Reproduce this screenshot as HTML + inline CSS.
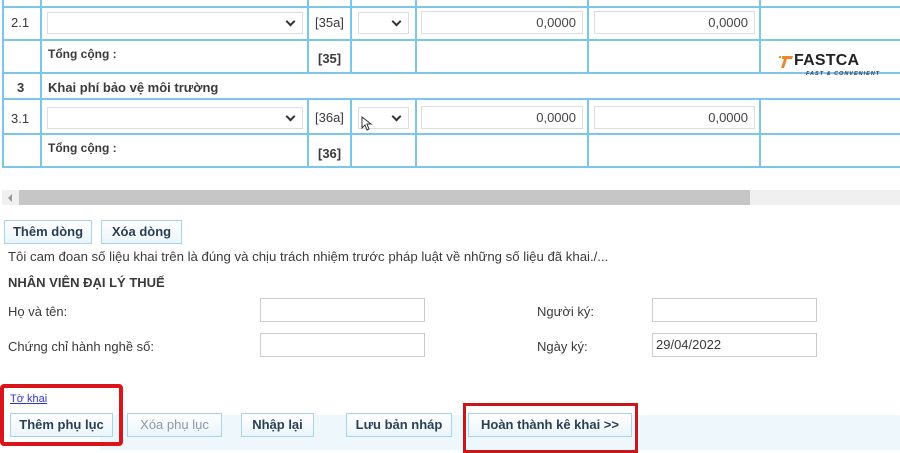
<!DOCTYPE html>
<html><head><meta charset="utf-8"><style>
*{margin:0;padding:0;box-sizing:border-box}
body{width:900px;height:450px;overflow:hidden;background:#fff;font-family:"Liberation Sans",Arial,sans-serif;font-size:13px;color:#3a3a3a;position:relative}
.a{position:absolute}
.h{position:absolute;height:2px;background:#7cc6e8}
.v{position:absolute;width:2px;background:#7cc6e8}
.sel{position:absolute;border:1px solid #ddd;background:#fff;height:22px}
.sel:after{content:"";position:absolute;right:8px;top:5px;width:5px;height:5px;border-right:2px solid #333;border-bottom:2px solid #333;transform:rotate(45deg)}
.inp{position:absolute;border:1px solid #ddd;background:#fff;height:23px;text-align:right;padding-right:6px;line-height:21px;font-size:13px;color:#444}
.b{font-weight:bold}
.btn{position:absolute;border:1px solid #a9d3ea;background:linear-gradient(#fff,#eaf5fb);font-weight:bold;font-size:13px;color:#2a3f55;text-align:center;line-height:22px;height:24px}
.f{position:absolute;border:1px solid #ccc;height:24px;background:#fff;font-size:13px;line-height:22px;padding-left:3px}
</style></head><body>
<div class="h" style="left:2px;top:6px;width:898px"></div>
<div class="h" style="left:2px;top:39px;width:898px"></div>
<div class="h" style="left:2px;top:72px;width:898px"></div>
<div class="h" style="left:2px;top:98px;width:898px"></div>
<div class="h" style="left:2px;top:133px;width:898px"></div>
<div class="h" style="left:2px;top:166px;width:898px"></div>
<div class="v" style="left:2px;top:0;height:168px"></div>
<div class="v" style="left:40px;top:0;height:168px"></div>
<div class="v" style="left:307px;top:0;height:74px"></div><div class="v" style="left:307px;top:98px;height:70px"></div>
<div class="v" style="left:350px;top:0;height:74px"></div><div class="v" style="left:350px;top:98px;height:70px"></div>
<div class="v" style="left:415px;top:0;height:74px"></div><div class="v" style="left:415px;top:98px;height:70px"></div>
<div class="v" style="left:587px;top:0;height:74px"></div><div class="v" style="left:587px;top:98px;height:70px"></div>
<div class="v" style="left:759px;top:0;height:74px"></div><div class="v" style="left:759px;top:98px;height:70px"></div>
<div class="a" style="left:11px;top:15px">2.1</div>
<div class="sel" style="left:47px;top:12px;width:256px"></div>
<div class="a" style="left:315px;top:15px">[35a]</div>
<div class="sel" style="left:358px;top:12px;width:51px"></div>
<div class="inp" style="left:421px;top:11px;width:162px">0,0000</div>
<div class="inp" style="left:594px;top:11px;width:161px">0,0000</div>
<div class="a b" style="left:48px;top:47px;font-size:12px">Tổng cộng :</div>
<div class="a b" style="left:318px;top:51px">[35]</div>
<div class="a b" style="left:17px;top:80px">3</div>
<div class="a b" style="left:48px;top:80px">Khai phí bảo vệ môi trường</div>
<div class="a" style="left:11px;top:111px">3.1</div>
<div class="sel" style="left:47px;top:107px;width:256px"></div>
<div class="a" style="left:315px;top:110px">[36a]</div>
<div class="sel" style="left:358px;top:107px;width:51px"></div>
<div class="inp" style="left:421px;top:106px;width:162px">0,0000</div>
<div class="inp" style="left:594px;top:106px;width:161px">0,0000</div>
<div class="a b" style="left:48px;top:141px;font-size:12px">Tổng cộng :</div>
<div class="a b" style="left:318px;top:146px">[36]</div>
<svg class="a" style="left:361px;top:116px" width="12" height="16"><path d="M1 1 L1 12 L4 9 L6 14 L8 13 L6 8 L10 8 Z" fill="#fff" stroke="#333"/></svg>
<!-- logo -->
<div class="a" style="left:778px;top:53px;width:96px;height:19px;background:#fff"></div>
<svg class="a" style="left:778px;top:55px" width="16" height="14"><path d="M1 1h2v2H1zM4 1h11l-1 3H9l-3 9H3l3-9H4z" fill="#e8872c"/></svg>
<div class="a" style="left:794px;top:53px;font-weight:bold;font-size:16px;color:#222;letter-spacing:0.2px;line-height:16px">FASTCA</div>
<div class="a" style="left:806px;top:71px;font-weight:bold;font-size:5.5px;color:#345;letter-spacing:1px;font-style:italic">FAST &amp; CONVENIENT</div>
<div class="a" style="left:2px;top:190px;width:898px;height:15px;background:#f0f0f0"></div>
<div class="a" style="left:19px;top:190px;width:731px;height:15px;background:#c6c6c6"></div>
<div class="a" style="left:8px;top:194px;width:0;height:0;border:4px solid transparent;border-right:4px solid #999;border-left:none"></div>
<div class="btn" style="left:4px;top:220px;width:88px">Thêm dòng</div>
<div class="btn" style="left:101px;top:220px;width:81px">Xóa dòng</div>
<div class="a" style="left:8px;top:249px;font-size:13.2px">Tôi cam đoan số liệu khai trên là đúng và chịu trách nhiệm trước pháp luật về những số liệu đã khai./...</div>
<div class="a b" style="left:8px;top:275px">NHÂN VIÊN ĐẠI LÝ THUẾ</div>
<div class="a" style="left:8px;top:304px">Họ và tên:</div>
<div class="f" style="left:260px;top:298px;width:165px"></div>
<div class="a" style="left:537px;top:304px">Người ký:</div>
<div class="f" style="left:652px;top:298px;width:165px"></div>
<div class="a" style="left:8px;top:339px">Chứng chỉ hành nghề số:</div>
<div class="f" style="left:260px;top:333px;width:165px"></div>
<div class="a" style="left:537px;top:339px">Ngày ký:</div>
<div class="f" style="left:652px;top:333px;width:165px">29/04/2022</div>
<div class="a" style="left:100px;top:415px;width:800px;height:35px;background:#eef7fc"></div>
<div class="a" style="left:10px;top:393px;font-size:11px;color:#33c;text-decoration:underline">Tờ khai</div>
<div class="btn" style="left:10px;top:413px;width:103px">Thêm phụ lục</div>
<div class="btn" style="left:127px;top:413px;width:95px;color:#8a97a5;font-weight:normal">Xóa phụ lục</div>
<div class="btn" style="left:241px;top:413px;width:73px">Nhập lại</div>
<div class="btn" style="left:346px;top:413px;width:106px">Lưu bản nháp</div>
<div class="btn" style="left:468px;top:413px;width:164px">Hoàn thành kê khai &gt;&gt;</div>
<div class="a" style="left:0;top:384px;width:123px;height:62px;border:4px solid #d9141a;border-radius:4px"></div>
<div class="a" style="left:463px;top:403px;width:175px;height:50px;border:3px solid #c8161d"></div>
</body></html>
